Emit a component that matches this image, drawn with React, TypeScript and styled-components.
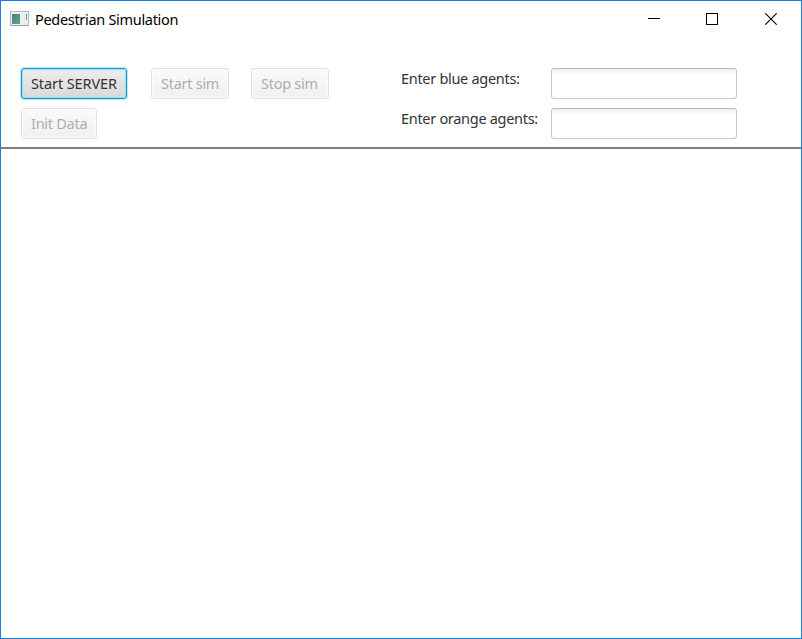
import React from 'react';
import styled, { createGlobalStyle, css } from 'styled-components';

const GlobalStyle = createGlobalStyle`
  html, body { margin: 0; background: #fff; overflow: hidden; }
  * { box-sizing: border-box; }
  body { font-family: 'Noto Sans', 'Open Sans', sans-serif; font-size: 14.5px; }
`;

const Window = styled.div`
  width: 802px;
  height: 639px;
  display: flex;
  flex-direction: column;
  border: 1px solid #1a80d5;
  background: #fff;
`;

const TitleBar = styled.header`
  height: 37px;
  display: flex;
  align-items: center;
  padding: 0 0 1px 9px;
`;

const Title = styled.h1`
  flex: 1;
  margin: 0 0 0 6px;
  font-size: 14.5px;
  font-weight: 400;
  line-height: 20px;
  letter-spacing: -0.31px;
  color: #000;
`;

const WindowButtons = styled.div`
  display: flex;
  margin-right: 1px;
`;

const WindowButton = styled.button`
  width: 58.5px;
  height: 36px;
  display: flex;
  align-items: center;
  justify-content: center;
  padding: 0;
  border: 0;
  background: none;
`;

const ControlPanel = styled.section`
  height: 111px;
  display: flex;
  align-items: flex-start;
  padding: 30px 0 0 20px;
  border-bottom: 2px solid #808080;
`;

const Actions = styled.div`
  width: 380px;
  display: grid;
  grid-template-columns: 130px 100px 1fr;
  grid-auto-rows: 31px;
  row-gap: 9px;
  justify-items: start;
`;

const ActionButton = styled.button<{ $width: number; $focused?: boolean }>`
  width: ${(p) => p.$width}px;
  height: 31px;
  padding: 0 0 1px 9px;
  text-align: left;
  font: inherit;
  line-height: 20px;
  white-space: nowrap;
  border-radius: 3px;
  ${(p) =>
    p.$focused
      ? css`
          letter-spacing: -0.1px;
          color: #333;
          border: 1px solid #0a9fd3;
          background: linear-gradient(#ededed, #d8d8d8);
          box-shadow: 0 0 0 1px rgba(3, 158, 211, 0.25), inset 0 0 0 1px rgba(130, 215, 238, 0.65);
        `
      : css`
          letter-spacing: -0.27px;
          color: #adadad;
          border: 1px solid #e1e1e1;
          background: linear-gradient(#fafafa, #f0f0f0);
          box-shadow: inset 0 0 0 1px rgba(255, 255, 255, 0.45);
        `}
`;

const Fields = styled.div`
  display: grid;
  grid-template-columns: 150px 186px;
  grid-auto-rows: 31px;
  row-gap: 9px;
`;

const FieldLabel = styled.label`
  line-height: 20px;
  letter-spacing: -0.3px;
  color: #333;
  white-space: nowrap;
`;

const TextField = styled.input`
  width: 186px;
  height: 31px;
  padding: 4px 8px;
  font: inherit;
  border: 1px solid #c8c8c8;
  border-top-color: #b9b9b9;
  border-radius: 3px;
  background: linear-gradient(#eee, #fff 5px);
  outline: none;
`;

const Canvas = styled.main`
  flex: 1;
`;

const AppIcon = () => (
  <svg width="19" height="16" viewBox="0 0 19 16" shapeRendering="crispEdges">
    <defs>
      <linearGradient id="screen" x1="0" y1="0" x2="1" y2="1">
        <stop offset="0" stopColor="#4a7f9b" />
        <stop offset="1" stopColor="#56a777" />
      </linearGradient>
      <linearGradient id="strip" x1="0" y1="0" x2="0" y2="1">
        <stop offset="0" stopColor="#4a78b4" />
        <stop offset="1" stopColor="#69b18a" />
      </linearGradient>
    </defs>
    <rect x="0.5" y="0.5" width="18" height="14" fill="#f0f0f0" stroke="#b4b8bd" />
    <path d="M0 14.5H19" stroke="#9b9b9b" />
    <rect x="2" y="3" width="8" height="10" fill="url(#screen)" />
    <path d="M11.5 2V13M14.5 2V13" stroke="#e8eaec" />
    <rect x="16" y="3" width="1" height="6" fill="url(#strip)" />
  </svg>
);

const Glyph = ({ d, crisp }: { d: string; crisp?: boolean }) => (
  <svg width="12" height="12" viewBox="0 0 12 12" fill="none" stroke="#000" shapeRendering={crisp ? 'crispEdges' : 'auto'}>
    <path d={d} strokeWidth={crisp ? 1 : 1.1} />
  </svg>
);

export default function App() {
  return (
    <>
      <GlobalStyle />
      <Window>
        <TitleBar>
          <AppIcon />
          <Title>Pedestrian Simulation</Title>
          <WindowButtons>
            <WindowButton aria-label="Minimize"><Glyph crisp d="M0 5.5H12" /></WindowButton>
            <WindowButton aria-label="Maximize"><Glyph crisp d="M.5 .5H11.5V11.5H.5Z" /></WindowButton>
            <WindowButton aria-label="Close"><Glyph d="M.3 .3L11.7 11.7M11.7 .3L.3 11.7" /></WindowButton>
          </WindowButtons>
        </TitleBar>
        <ControlPanel>
          <Actions>
            <ActionButton $width={106} $focused>Start SERVER</ActionButton>
            <ActionButton $width={78} disabled>Start sim</ActionButton>
            <ActionButton $width={78} disabled>Stop sim</ActionButton>
            <ActionButton $width={76} disabled>Init Data</ActionButton>
          </Actions>
          <Fields>
            <FieldLabel htmlFor="blue">Enter blue agents:</FieldLabel>
            <TextField id="blue" />
            <FieldLabel htmlFor="orange">Enter orange agents:</FieldLabel>
            <TextField id="orange" />
          </Fields>
        </ControlPanel>
        <Canvas />
      </Window>
    </>
  );
}
